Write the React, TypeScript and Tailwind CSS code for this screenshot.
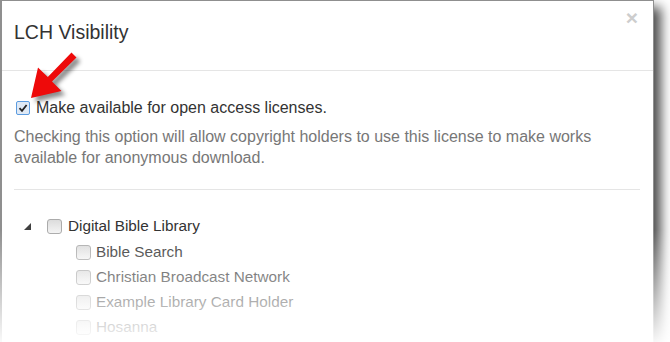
const Box = ({ checked = false }: { checked?: boolean }) =>
  checked ? (
    <span className="flex h-[14px] w-[14px] shrink-0 items-center justify-center rounded-[2px] border border-[#5c9ce0] bg-[#dfe9f5]">
      <svg width="10" height="10" viewBox="0 0 10 10">
        <path d="M1.5 5.2 L4 7.8 L8.6 2" fill="none" stroke="#222" strokeWidth="1.8" />
      </svg>
    </span>
  ) : (
    <span className="block h-[15px] w-[15px] shrink-0 rounded-[3px] border border-[#ababab] bg-linear-to-b from-[#dcdcdc] to-[#f4f4f4]" />
  )

const children = ['Bible Search', 'Christian Broadcast Network', 'Example Library Card Holder', 'Hosanna']

export default function App() {
  return (
    <div className="relative h-[342px] w-[670px] overflow-hidden bg-white font-['Liberation_Sans',Arial,sans-serif] text-[16px] text-[#333]">
      <div className="h-[380px] w-[654px] border-t border-r border-l-2 border-[#8f8f8f] bg-white shadow-[7px_7px_11px_rgba(0,0,0,0.7)]">
        <div className="flex h-[70px] items-start justify-between border-b border-[#e5e5e5] pr-[15px] pl-[12px]">
          <h4 className="pt-[20px] text-[19.5px] leading-[22px] text-[#333]">LCH Visibility</h4>
          <span className="mt-[6px] text-[21px] leading-[21px] font-bold text-[#cdcdcd]">×</span>
        </div>

        <div className="pt-[27px] pr-[13px] pl-[12px]">
          <label className="flex h-[20px] items-center gap-[6px] pl-[2px]">
            <Box checked />
            <span>Make available for open access licenses.</span>
          </label>
          <p className="mt-[8px] leading-[21px] text-[#777]">
            Checking this option will allow copyright holders to use this license to make works
            available for anonymous download.
          </p>
          <div className="mt-[21px] border-t border-[#e5e5e5]" />

          <div className="mt-[22px] text-[15.3px]">
            <div className="flex h-[28px] items-center">
              <svg width="7" height="7" viewBox="0 0 7 7" className="ml-[10px]">
                <polygon points="7,0 7,7 0,7" fill="#404040" />
              </svg>
              <div className="ml-[16px]">
                <Box />
              </div>
              <span className="ml-[6px]">Digital Bible Library</span>
            </div>
            {children.map((c) => (
              <div key={c} className="flex h-[25px] items-center pl-[62px]">
                <Box />
                <span className="ml-[5px]">{c}</span>
              </div>
            ))}
          </div>
        </div>
      </div>

      <svg
        width="100"
        height="110"
        viewBox="0 0 100 110"
        className="absolute top-0 left-0 drop-shadow-[4px_4px_2px_rgba(0,0,0,0.45)]"
      >
        <polygon
          points="71.5,52.5 76.5,57.5 52,81.5 61.5,91 31,98 38,67.5 47.8,77"
          fill="#ee0a0a"
          strokeLinejoin="round"
        />
      </svg>

      <div className="absolute inset-x-0 bottom-0 h-[112px] bg-linear-to-b from-white/0 to-white/95" />
    </div>
  )
}
